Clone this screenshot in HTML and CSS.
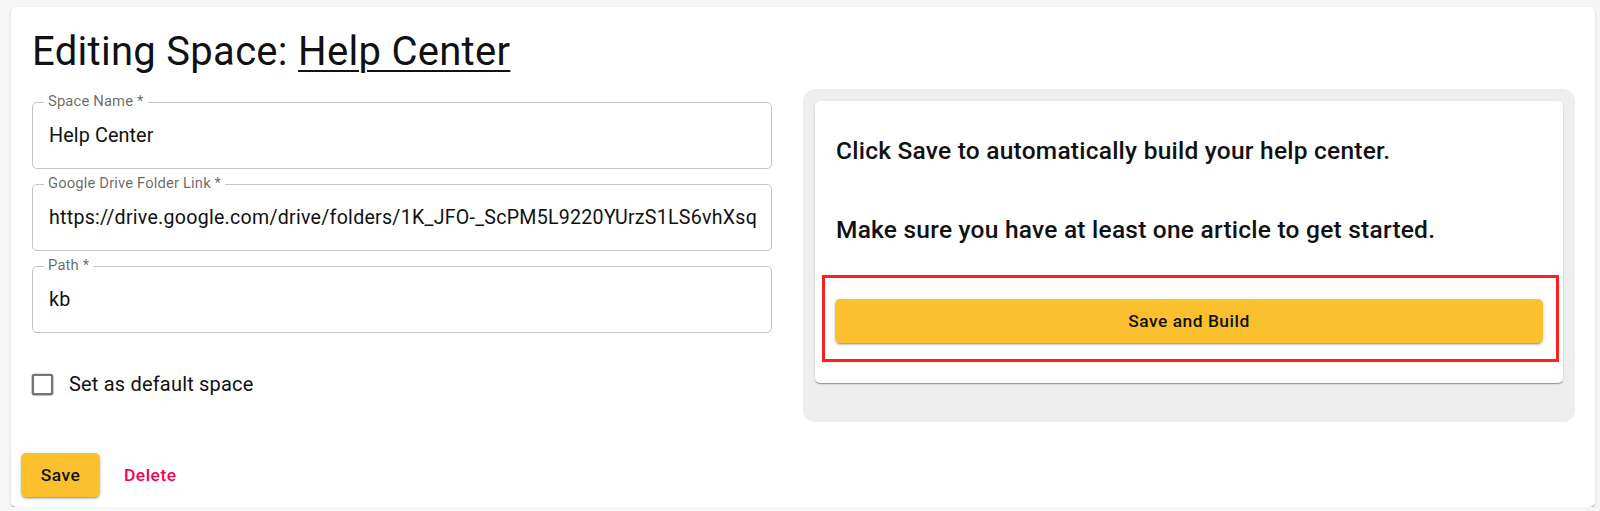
FILE: index.html
```html
<!DOCTYPE html>
<html lang="en">
<head>
<meta charset="utf-8">
<title>Editing Space: Help Center</title>
<link rel="stylesheet" href="styles.css">
</head>
<body>
<div class="card">
  <div class="content">
    <h1 class="title">Editing Space: <a href="#" class="title-link">Help Center</a></h1>
    <div class="grid">
      <div class="form">
        <div class="field">
          <span class="label">Space Name *</span>
          <span class="value">Help Center</span>
        </div>
        <div class="field">
          <span class="label">Google Drive Folder Link *</span>
          <span class="value url">https://drive.google.com/drive/folders/1K_JFO-_ScPM5L9220YUrzS1LS6vhXsq</span>
        </div>
        <div class="field">
          <span class="label">Path *</span>
          <span class="value">kb</span>
        </div>
        <label class="check-row">
          <svg class="check-icon" viewBox="0 0 24 24" aria-hidden="true"><path d="M19 5v14H5V5h14m0-2H5c-1.11 0-2 .9-2 2v14c0 1.1.89 2 2 2h14c1.1 0 2-.9 2-2V5c0-1.1-.9-2-2-2z"/></svg>
          <span class="check-text">Set as default space</span>
        </label>
      </div>
      <div class="panel">
        <div class="inner-card">
          <p class="info first">Click Save to automatically build your help center.</p>
          <p class="info second">Make sure you have at least one article to get started.</p>
          <div class="highlight">
            <button class="build-btn">Save and Build</button>
          </div>
        </div>
      </div>
    </div>
  </div>
  <div class="actions">
    <button class="save-btn">Save</button>
    <button class="delete-btn">Delete</button>
  </div>
</div>
</body>
</html>
```
FILE: styles.css
```css
* { box-sizing: border-box; }

html, body {
  margin: 0;
  padding: 0;
}

body {
  background: #f6f6f6;
  font-family: Roboto, "Liberation Sans", Arial, sans-serif;
  color: rgba(0, 0, 0, 0.87);
  padding: 7px 5px 0 11px;
}

.card {
  width: 1584px;
  height: 500px;
  background: #fff;
  border-radius: 5px;
  box-shadow: 0 2px 1px -1px rgba(0,0,0,0.2), 0 1px 1px 0 rgba(0,0,0,0.14), 0 1px 3px 0 rgba(0,0,0,0.12);
  display: flex;
  flex-direction: column;
}

.content {
  padding: 21px 20px 21px 21px;
}

.title {
  margin: 0;
  font-size: 40px;
  font-weight: 400;
  line-height: 48px;
  letter-spacing: 0.00735em;
  color: #111;
}

.title-link {
  color: inherit;
  text-decoration: underline;
  text-decoration-thickness: 2px;
  text-underline-offset: 5px;
}

.grid {
  margin-top: 13px;
  display: grid;
  grid-template-columns: 740px 772px;
  column-gap: 31px;
  align-items: start;
}

.form {
  padding-top: 13px;
  display: flex;
  flex-direction: column;
}

.field {
  position: relative;
  height: 67px;
  border: 1px solid #c4c4c4;
  border-radius: 5px;
  display: flex;
  align-items: center;
  padding: 0 6px 0 16px;
  margin-bottom: 15px;
}

.field:nth-child(3) { margin-bottom: 0; }

.label {
  position: absolute;
  top: -10px;
  left: 11px;
  padding: 0 4px;
  background: #fff;
  font-size: 14.8px;
  line-height: 17px;
  color: rgba(0, 0, 0, 0.6);
  letter-spacing: 0.00938em;
}

.value {
  font-size: 19.8px;
  line-height: 24px;
  letter-spacing: 0.1px;
  color: #111;
  white-space: nowrap;
}

.value.url {
  font-size: 19.6px;
  letter-spacing: 0.26px;
}

.check-row {
  margin-top: 27px;
  height: 48px;
  display: flex;
  align-items: center;
}

.check-icon {
  width: 29px;
  height: 29px;
  margin-left: -4px;
  fill: rgba(0, 0, 0, 0.54);
}

.check-text {
  margin-left: 12px;
  font-size: 20px;
  letter-spacing: 0.00938em;
  color: #111;
}

.panel {
  background: #eeeeee;
  border-radius: 12px;
  padding: 12px 12px 39px 12px;
}

.inner-card {
  background: #fff;
  border-radius: 5px;
  box-shadow: 0 2px 1px -1px rgba(0,0,0,0.2), 0 1px 1px 0 rgba(0,0,0,0.14), 0 1px 3px 0 rgba(0,0,0,0.12);
  padding: 33px 4px 21px 7px;
}

.info {
  margin: 0 0 0 14px;
  font-size: 24.5px;
  font-weight: 500;
  line-height: 33px;
  letter-spacing: 0.00938em;
  color: #111;
}

.info.second { margin-top: 46px; }

.highlight {
  margin-top: 29px;
  border: 3px solid #ff1f1f;
  padding: 21px 13px 16px 10px;
}

.build-btn {
  display: block;
  width: 100%;
  height: 44px;
  border: none;
  border-radius: 5px;
  background: #fbc02d;
  font-family: inherit;
  font-size: 17.4px;
  font-weight: 500;
  letter-spacing: 0.02857em;
  color: #111;
  box-shadow: 0 3px 1px -2px rgba(0,0,0,0.2), 0 2px 2px 0 rgba(0,0,0,0.14), 0 1px 5px 0 rgba(0,0,0,0.12);
}

.actions {
  margin-top: auto;
  padding: 0 10px 10px 10px;
  display: flex;
  align-items: center;
  gap: 14px;
}

.save-btn {
  width: 79px;
  height: 44px;
  border: none;
  border-radius: 5px;
  background: #fbc02d;
  font-family: inherit;
  font-size: 17.4px;
  font-weight: 500;
  letter-spacing: 0.02857em;
  color: #111;
  box-shadow: 0 3px 1px -2px rgba(0,0,0,0.2), 0 2px 2px 0 rgba(0,0,0,0.14), 0 1px 5px 0 rgba(0,0,0,0.12);
}

.delete-btn {
  height: 44px;
  border: none;
  background: transparent;
  padding: 0 10px;
  font-family: inherit;
  font-size: 17.4px;
  font-weight: 500;
  letter-spacing: 0.02857em;
  color: #f50057;
}
```
